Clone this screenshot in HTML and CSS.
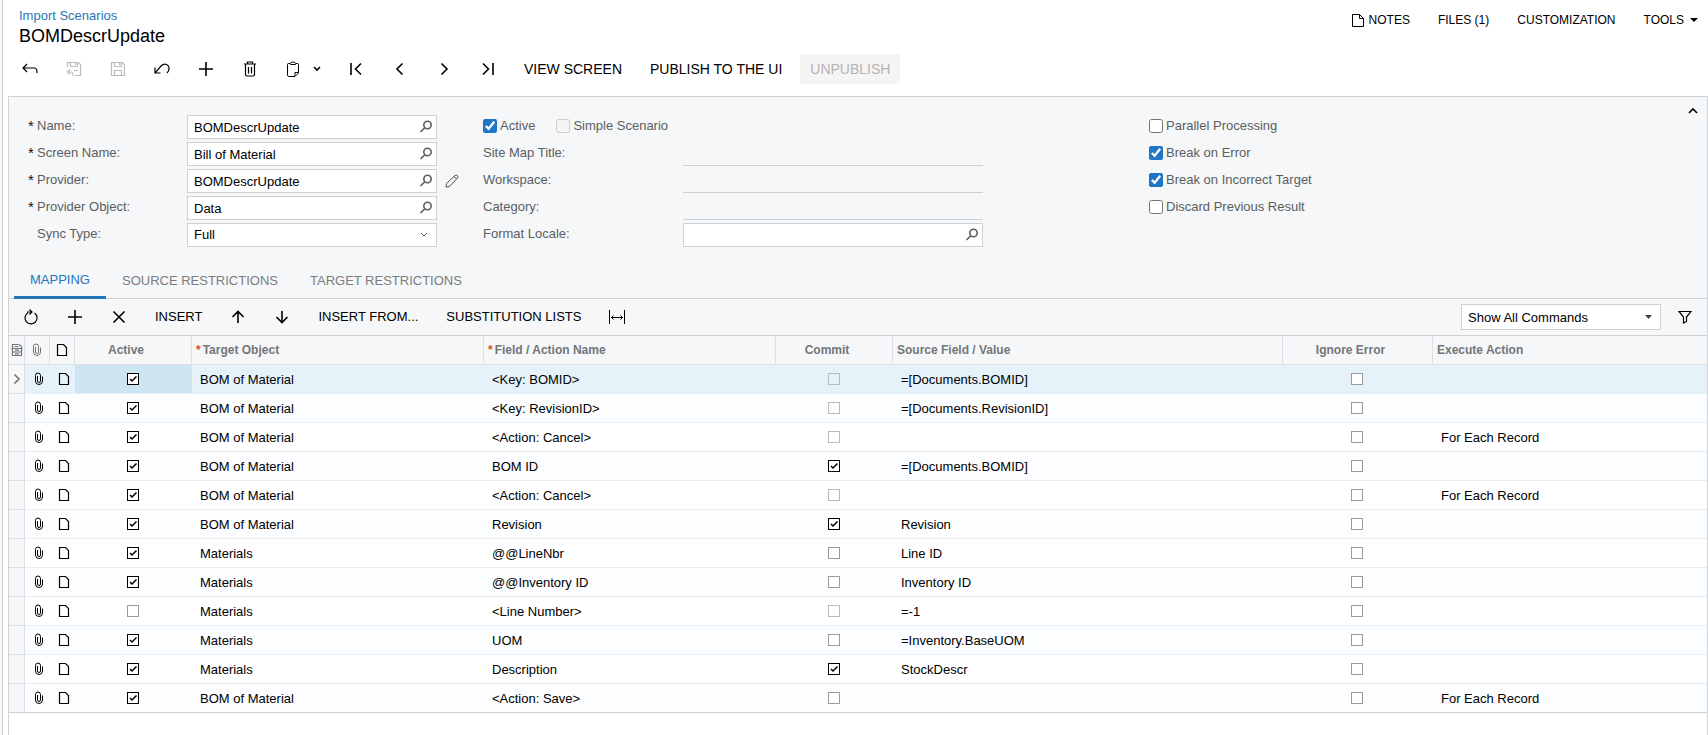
FILE: index.html
```html
<!DOCTYPE html>
<html lang="en">
<head>
    <meta charset="UTF-8">
    <title>Import Scenarios</title>
    <link rel="stylesheet" href="styles.css">
</head>
<body>
    <svg class="icon-defs" aria-hidden="true">
        <symbol id="search" viewBox="0 0 14 14"><circle cx="8.5" cy="5" r="3.7"/><path d="M5.8 7.8 1.5 12"/></symbol>
        <symbol id="clip" viewBox="0 0 10 14"><path d="M1.500 3.500v5.500a3.500 3.500 0 0 0 7 0V4.500M1.500 3.500a2.500 2.500 0 0 1 5 0V9a1.500 1.500 0 0 1-3 0V4"/></symbol>
        <symbol id="page" viewBox="0 0 12 14"><path d="M1.500 1.500h6l3 3v8h-9z"/></symbol>
        <symbol id="plus" viewBox="0 0 16 16"><path d="M8 1v14M1 8h14"/></symbol>
    </svg>

    <div class="page">
        <header class="header">
            <div>
                <a class="breadcrumb" href="#">Import Scenarios</a>
                <h1>BOMDescrUpdate</h1>
            </div>
            <nav class="menu">
                <button type="button">
                    <svg class="thin" width="14" height="15" viewBox="0 0 14 15"><path d="M1.500 1.500h7l4 4v8h-11zM8.500 1.500v4h4"/></svg>
                    NOTES
                </button>
                <button type="button">FILES (1)</button>
                <button type="button">CUSTOMIZATION</button>
                <button type="button">TOOLS <span class="caret"></span></button>
            </nav>
        </header>

        <div class="toolbar main-toolbar">
            <button type="button" class="icon-btn" aria-label="Back">
                <svg width="16" height="16" viewBox="0 0 16 16"><path d="M5 3 1 7l4 4M1 7h11q3 0 3 4v1"/></svg>
            </button>
            <button type="button" class="icon-btn" aria-label="Save and Close" disabled>
                <svg width="16" height="16" viewBox="0 0 16 16"><path d="M1.500 6V1.500h11l2 2v11H9M4.500 1.500v4h7v-4M9.500 2v2M8 9.500h4M4 8.500l-2.500 2.500L4 13.500M1.500 11H5q2 0 2 3v1"/></svg>
            </button>
            <button type="button" class="icon-btn" aria-label="Save" disabled>
                <svg width="16" height="16" viewBox="0 0 16 16"><path d="M1.500 1.500h11l2 2v11h-13zM4.500 1.500v4h7v-4M9.500 2v2M4.500 14.500v-5h7v5"/></svg>
            </button>
            <button type="button" class="icon-btn" aria-label="Undo">
                <svg width="16" height="16" viewBox="0 0 16 16"><path d="M1 6.500V12h5.500M1.200 11.800 7 5q3.500-3.500 7-.5 2.500 3.500-1 7.500"/></svg>
            </button>
            <button type="button" class="icon-btn" aria-label="Add">
                <svg class="bold" width="16" height="16"><use href="#plus"/></svg>
            </button>
            <button type="button" class="icon-btn" aria-label="Delete">
                <svg width="12" height="16" viewBox="0 0 12 16"><path d="M0 3h12M3.500 3V1h5v2M1.500 3v10.500q0 1.500 1.500 1.500h6q1.500 0 1.500-1.500V3M4.500 6v6.500M7.500 6v6.500"/></svg>
            </button>
            <button type="button" class="icon-btn clipboard-btn" aria-label="Clipboard">
                <svg class="thin" width="14" height="16" viewBox="0 0 14 16"><path d="M4 2.500H2.500q-1 0-1 1v10q0 2 1 2H9l3.500-3.500V3.500q0-1-1-1H10M4.500 3.500v-1q0-1.500 2.500-1.500t2.500 1.500v1zM9 15v-3.500h3.500"/></svg>
                <svg class="bold" width="8" height="6" viewBox="0 0 8 6"><path d="m1 1 3 3 3-3"/></svg>
            </button>
            <button type="button" class="icon-btn" aria-label="First">
                <svg class="bold" width="14" height="14" viewBox="0 0 14 14"><path d="M2 1v12M12 1.500 6.500 7l5.500 5.500"/></svg>
            </button>
            <button type="button" class="icon-btn" aria-label="Previous">
                <svg class="bold" width="14" height="14" viewBox="0 0 14 14"><path d="M9.500 1.500 4 7l5.500 5.500"/></svg>
            </button>
            <button type="button" class="icon-btn" aria-label="Next">
                <svg class="bold" width="14" height="14" viewBox="0 0 14 14"><path d="M4.500 1.500 10 7l-5.500 5.500"/></svg>
            </button>
            <button type="button" class="icon-btn" aria-label="Last">
                <svg class="bold" width="14" height="14" viewBox="0 0 14 14"><path d="M12 1v12M2 1.500 7.500 7 2 12.500"/></svg>
            </button>
            <button type="button" class="text-btn">VIEW SCREEN</button>
            <button type="button" class="text-btn">PUBLISH TO THE UI</button>
            <button type="button" class="text-btn" disabled>UNPUBLISH</button>
        </div>

        <main class="panel">
            <form class="form" onsubmit="event.preventDefault();">
                <div class="group">
                    <div class="field">
                        <label class="required" for="name">Name:</label>
                        <div class="box"><input id="name" type="text" value="BOMDescrUpdate"><svg width="14" height="14"><use href="#search"/></svg></div>
                    </div>
                    <div class="field">
                        <label class="required" for="screen-name">Screen Name:</label>
                        <div class="box"><input id="screen-name" type="text" value="Bill of Material"><svg width="14" height="14"><use href="#search"/></svg></div>
                    </div>
                    <div class="field">
                        <label class="required" for="provider">Provider:</label>
                        <div class="box"><input id="provider" type="text" value="BOMDescrUpdate"><svg width="14" height="14"><use href="#search"/></svg></div>
                        <button type="button" class="edit-btn" aria-label="Edit Provider">
                            <svg class="thin" width="14" height="14" viewBox="0 0 14 14"><path d="m1 13 .5-3.500L10 1.500q1.500-1 2.500 0t0 2.500L4.500 12.500zM9 2.500 11.500 5"/></svg>
                        </button>
                    </div>
                    <div class="field">
                        <label class="required" for="provider-object">Provider Object:</label>
                        <div class="box"><input id="provider-object" type="text" value="Data"><svg width="14" height="14"><use href="#search"/></svg></div>
                    </div>
                    <div class="field">
                        <label for="sync-type">Sync Type:</label>
                        <select id="sync-type" class="sync-type">
                            <option>Full</option>
                            <option>Incremental</option>
                        </select>
                    </div>
                </div>

                <div class="group middle">
                    <div class="field checks">
                        <label class="check"><input type="checkbox" checked>Active</label>
                        <label class="check"><input type="checkbox" disabled>Simple Scenario</label>
                    </div>
                    <div class="field">
                        <label for="site-map">Site Map Title:</label>
                        <input id="site-map" class="line-input" type="text" readonly>
                    </div>
                    <div class="field">
                        <label for="workspace">Workspace:</label>
                        <input id="workspace" class="line-input" type="text" readonly>
                    </div>
                    <div class="field">
                        <label for="category">Category:</label>
                        <input id="category" class="line-input" type="text" readonly>
                    </div>
                    <div class="field">
                        <label for="locale">Format Locale:</label>
                        <div class="box"><input id="locale" type="text"><svg width="14" height="14"><use href="#search"/></svg></div>
                    </div>
                </div>

                <div class="group options">
                    <div class="field"><label class="check"><input type="checkbox">Parallel Processing</label></div>
                    <div class="field"><label class="check"><input type="checkbox" checked>Break on Error</label></div>
                    <div class="field"><label class="check"><input type="checkbox" checked>Break on Incorrect Target</label></div>
                    <div class="field"><label class="check"><input type="checkbox">Discard Previous Result</label></div>
                </div>

                <button type="button" class="collapse-btn" aria-label="Collapse">
                    <svg class="bold" width="10" height="7" viewBox="0 0 10 7"><path d="m1 6 4-4 4 4"/></svg>
                </button>
            </form>

            <div class="tabs" role="tablist">
                <button type="button" role="tab" class="active" aria-selected="true">MAPPING</button>
                <button type="button" role="tab">SOURCE RESTRICTIONS</button>
                <button type="button" role="tab">TARGET RESTRICTIONS</button>
            </div>

            <div class="toolbar grid-toolbar">
                <button type="button" class="icon-btn" aria-label="Refresh">
                    <svg width="14" height="16" viewBox="0 0 14 16"><path d="M4 3.700a6 6 0 1 0 6.500.3M3 3h5M5.500.5 8 3 5.500 5.500"/></svg>
                </button>
                <button type="button" class="icon-btn" aria-label="Add Row">
                    <svg class="bold" width="16" height="16"><use href="#plus"/></svg>
                </button>
                <button type="button" class="icon-btn" aria-label="Delete Row">
                    <svg class="bold" width="14" height="14" viewBox="0 0 14 14"><path d="m1.500 1.500 11 11M12.500 1.500l-11 11"/></svg>
                </button>
                <button type="button" class="text-btn">INSERT</button>
                <button type="button" class="icon-btn" aria-label="Move Up">
                    <svg class="bold" width="14" height="14" viewBox="0 0 14 14"><path d="M7 13V2M1.500 7 7 1.500 12.500 7"/></svg>
                </button>
                <button type="button" class="icon-btn" aria-label="Move Down">
                    <svg class="bold" width="14" height="14" viewBox="0 0 14 14"><path d="M7 1v11M1.500 7 7 12.500 12.500 7"/></svg>
                </button>
                <button type="button" class="text-btn">INSERT FROM...</button>
                <button type="button" class="text-btn">SUBSTITUTION LISTS</button>
                <button type="button" class="icon-btn" aria-label="Fit to Screen">
                    <svg class="thin" width="18" height="14" viewBox="0 0 18 14"><path d="M1.500 0v14M16.500 0v14M3 7.500h12M5.500 5.500l-2 2 2 2M12.500 5.500l2 2-2 2"/></svg>
                </button>
                <select class="command-filter" aria-label="Commands">
                    <option>Show All Commands</option>
                </select>
                <button type="button" class="icon-btn filter-btn" aria-label="Filter">
                    <svg width="14" height="14" viewBox="0 0 14 14"><path d="M1 1.500h12L8.500 7v4.500L5.500 13V7z"/></svg>
                </button>
            </div>

            <table class="grid">
                <colgroup>
                    <col class="col-row">
                    <col class="col-icon">
                    <col class="col-icon">
                    <col class="col-flag">
                    <col class="col-name">
                    <col class="col-name">
                    <col class="col-flag">
                    <col class="col-source">
                    <col class="col-ignore">
                    <col>
                </colgroup>
                <thead>
                    <tr>
                        <th class="icon"><svg width="12" height="12" viewBox="0 0 12 12"><path d="M1.500 4.500v-4h6M8 .5l2.500 2v2M.5 4.500h11M1.500 4.500v7h9v-7M1.500 8h9M3.500 2.500h4M4 6.200h4M4 9.800h4"/></svg></th>
                        <th class="icon"><svg class="thin" width="10" height="14"><use href="#clip"/></svg></th>
                        <th class="icon dark"><svg width="12" height="14"><use href="#page"/></svg></th>
                        <th class="flag">Active</th>
                        <th><span class="star">*</span>Target Object</th>
                        <th><span class="star">*</span>Field / Action Name</th>
                        <th class="flag">Commit</th>
                        <th>Source Field / Value</th>
                        <th class="flag">Ignore Error</th>
                        <th>Execute Action</th>
                    </tr>
                </thead>
                <tbody id="rows"></tbody>
            </table>
        </main>
    </div>
    <script src="script.js"></script>
</body>
</html>
```

FILE: styles.css
```css
* {
    box-sizing: border-box;
}

body {
    margin: 0;
    padding-left: 2px;
    background: #f5f7f9;
    color: #000;
    font-family: "Liberation Sans", Arial, sans-serif;
    font-size: 13px;
}

button, input, select {
    font: inherit;
    color: inherit;
}

button {
    padding: 0;
    border: none;
    background: none;
    cursor: pointer;
}

svg {
    flex: none;
    fill: none;
    stroke: currentColor;
    stroke-width: 1.2;
}

.thin {
    stroke-width: 1;
}

.bold {
    stroke-width: 1.6;
}

.icon-defs {
    display: none;
}

.page {
    display: flex;
    flex-direction: column;
    min-height: 100vh;
    padding-left: 5px;
    border-left: 1px solid #ced0d3;
    background: #fff;
}

/* header */
.header {
    display: flex;
    justify-content: space-between;
    padding: 8px 8px 0 11px;
}

.breadcrumb {
    display: block;
    line-height: 16px;
    color: #2a75b8;
    text-decoration: none;
}

h1 {
    margin: 0;
    font-size: 18px;
    font-weight: normal;
    line-height: 24px;
}

.menu {
    display: flex;
    align-items: flex-start;
    gap: 28px;
    padding-top: 4px;
}

.menu button {
    display: flex;
    align-items: center;
    gap: 4px;
    height: 16px;
    font-size: 12px;
}

.caret {
    margin: 0 2px;
    border: 4px solid transparent;
    border-top-color: #000;
    border-bottom: none;
}

/* toolbars */
.toolbar {
    display: flex;
    align-items: center;
    gap: 8px;
    padding-left: 4px;
}

.main-toolbar {
    height: 48px;
    padding-bottom: 6px;
    font-size: 14px;
}

.icon-btn {
    display: flex;
    align-items: center;
    justify-content: center;
    width: 36px;
    height: 30px;
}

.icon-btn:disabled {
    color: #b9bbbd;
}

.clipboard-btn {
    gap: 13px;
    width: 54px;
}

.text-btn {
    height: 30px;
    padding: 0 10px;
}

.text-btn:disabled {
    background: #f5f5f5;
    color: #b3b3b3;
}

/* form */
.panel {
    flex: 1;
    border: 1px solid #d0d3d6;
    border-bottom: none;
}

.form {
    position: relative;
    display: grid;
    grid-template-columns: 474px 666px 1fr;
    padding-top: 18px;
    height: 168px;
    background: #f5f7f9;
    color: #5b5e60;
}

.group {
    display: flex;
    flex-direction: column;
    gap: 3px;
    padding-left: 28px;
}

.middle, .options {
    padding-left: 0;
}

.field {
    display: flex;
    align-items: center;
    height: 24px;
}

.field > label {
    width: 150px;
    line-height: 16px;
    padding-bottom: 2px;
}

.middle .field > label {
    width: 200px;
}

.required::before {
    content: "*";
    display: inline-block;
    width: 9px;
    height: 12px;
    margin-left: -9px;
    color: #111;
    font-size: 15px;
    line-height: 16px;
    vertical-align: top;
}

.box {
    display: flex;
    align-items: center;
    width: 250px;
    height: 24px;
    padding: 0 3px 0 6px;
    border: 1px solid #ced1d4;
    background: #fff;
}

.box input {
    flex: 1;
    min-width: 0;
    padding: 0;
    border: none;
    outline: none;
    background: none;
    color: #000;
}

.box svg {
    stroke-width: 1.6;
}

.middle .box {
    width: 300px;
}

.line-input {
    width: 300px;
    height: 24px;
    border: none;
    border-bottom: 1px solid #ced1d4;
    background: none;
}

select {
    appearance: none;
    border: 1px solid #ced1d4;
    border-radius: 0;
    color: #000;
    background: #fff no-repeat right 8px center;
}

.sync-type {
    width: 250px;
    height: 24px;
    padding: 0 6px 2px;
    background-image: url("data:image/svg+xml,%3Csvg xmlns='http://www.w3.org/2000/svg' width='8' height='6'%3E%3Cpath d='m1 1 3 3 3-3' fill='none' stroke='%23555'/%3E%3C/svg%3E");
}

.edit-btn {
    display: flex;
    margin-left: 8px;
    color: #4d5052;
}

.field .check {
    display: flex;
    align-items: center;
    gap: 3px;
    width: auto;
}

.checks {
    gap: 21px;
}

.middle .checks .check {
    width: auto;
}

.check input {
    width: 14px;
    height: 14px;
    margin: 0;
    accent-color: #1f76c6;
}

.collapse-btn {
    position: absolute;
    top: 6px;
    right: 4px;
    width: 20px;
    height: 14px;
    color: #000;
}

.collapse-btn svg {
    display: block;
    margin: auto;
}

/* tabs */
.tabs {
    display: flex;
    height: 34px;
    padding-left: 5px;
    border-bottom: 1px solid #d0d3d6;
    background: #f5f7f9;
}

.tabs button {
    height: 34px;
    padding: 0 16px;
    border-bottom: 3px solid transparent;
    color: #7a7d7f;
}

.tabs .active {
    padding-bottom: 2px;
    border-bottom-color: #2676bc;
    color: #2676bc;
}

.grid-toolbar {
    height: 36px;
    padding-right: 4px;
    background: #f5f7f9;
}

.grid-toolbar .text-btn {
    padding-bottom: 2px;
}

.command-filter {
    width: 200px;
    height: 26px;
    margin-left: auto;
    padding: 0 6px;
    background-image: url("data:image/svg+xml,%3Csvg xmlns='http://www.w3.org/2000/svg' width='7' height='4'%3E%3Cpath d='M0 0h7L3.5 4z' fill='%23444'/%3E%3C/svg%3E");
}

.filter-btn {
    margin-left: -2px;
}

/* grid */
.grid {
    width: 100%;
    table-layout: fixed;
    border-spacing: 0;
    border-bottom: 1px solid #ced1d4;
}

.col-row {
    width: 16px;
}

.col-icon {
    width: 25px;
}

.col-flag {
    width: 117px;
}

.col-name {
    width: 292px;
}

.col-source {
    width: 390px;
}

.col-ignore {
    width: 150px;
}

.grid th {
    height: 30px;
    padding: 0 4px;
    border: 1px solid #dcdfe3;
    border-width: 1px 1px 1px 0;
    border-top-color: #ced1d4;
    background: #f5f7f9;
    color: #737678;
    font-size: 12px;
    text-align: left;
}

.grid th:last-child {
    border-right: none;
}

.grid th.flag {
    padding-right: 18px;
    text-align: center;
}

.grid th.icon {
    padding: 0;
}

.grid th.dark {
    color: #000;
}

.star {
    margin-right: 2px;
    color: #e0501c;
}

.grid td {
    height: 29px;
    padding: 0 8px;
    border-bottom: 1px solid #e4eef4;
}

.grid tr:nth-child(even) td {
    background: #fbfdff;
}

.grid tbody tr:last-child td {
    height: 28px;
    border-bottom: none;
}

.grid tr.selected td {
    background: #e5f2fa;
    border-bottom-color: #e5f2fa;
}

.grid tr.selected .first {
    background: #cde4f3;
}

.grid tbody tr td.row-mark {
    padding: 0;
    border-right: 1px solid #dcdfe3;
    border-bottom-color: #dcdfe3;
    background: #f5f7f9;
    color: #737678;
}

.grid td.icon {
    padding: 0 0 0 3px;
}

.icon svg, .row-mark svg {
    display: block;
    margin: auto;
}

.grid td.flag {
    padding: 0 2px 0 0;
    text-align: center;
}

.flag input {
    display: block;
    appearance: none;
    width: 12px;
    height: 12px;
    margin: auto;
    border: 1px solid #989b9e;
    background: #fff;
}

.flag input:checked {
    border-color: #000;
    background-image: url("data:image/svg+xml,%3Csvg xmlns='http://www.w3.org/2000/svg' width='10' height='10'%3E%3Cpath d='m2 5 2 2 4.500-4.500' fill='none' stroke='%23000' stroke-width='1.500'/%3E%3C/svg%3E");
}

.flag input:disabled {
    border-color: #b8bbbd;
    background: none;
}
```

FILE: script.js
```js
// active, target object, field, commit (null = read-only), source, execute action
const rows = [
    [true, 'BOM of Material', '<Key: BOMID>', null, '=[Documents.BOMID]', ''],
    [true, 'BOM of Material', '<Key: RevisionID>', null, '=[Documents.RevisionID]', ''],
    [true, 'BOM of Material', '<Action: Cancel>', null, '', 'For Each Record'],
    [true, 'BOM of Material', 'BOM ID', true, '=[Documents.BOMID]', ''],
    [true, 'BOM of Material', '<Action: Cancel>', null, '', 'For Each Record'],
    [true, 'BOM of Material', 'Revision', true, 'Revision', ''],
    [true, 'Materials', '@@LineNbr', false, 'Line ID', ''],
    [true, 'Materials', '@@Inventory ID', false, 'Inventory ID', ''],
    [false, 'Materials', '<Line Number>', null, '=-1', ''],
    [true, 'Materials', 'UOM', false, '=Inventory.BaseUOM', ''],
    [true, 'Materials', 'Description', true, 'StockDescr', ''],
    [true, 'BOM of Material', '<Action: Save>', false, '', 'For Each Record']
];

function addCell(tr, className, html) {
    const td = tr.insertCell();
    td.className = className;
    td.innerHTML = html;
    return td;
}

function addCheck(tr, className, label, value) {
    const td = addCell(tr, className, `<input type="checkbox" aria-label="${label}">`);
    td.firstChild.checked = value === true;
    td.firstChild.disabled = value === null;
}

function addText(tr, text) {
    tr.insertCell().textContent = text;
}

const body = document.getElementById('rows');

rows.forEach(([active, target, field, commit, source, action], i) => {
    const tr = body.insertRow();
    if (i === 0) {
        tr.className = 'selected';
    }
    addCell(tr, 'row-mark', i === 0 ? '<svg class="bold" width="8" height="12" viewBox="0 0 8 12"><path d="m1.500 1.500 4.500 4.500-4.500 4.500"/></svg>' : '');
    addCell(tr, 'icon', '<svg class="thin" width="10" height="14"><use href="#clip"/></svg>');
    addCell(tr, 'icon', '<svg width="12" height="14"><use href="#page"/></svg>');
    addCheck(tr, 'flag first', 'Active', active);
    addText(tr, target);
    addText(tr, field);
    addCheck(tr, 'flag', 'Commit', commit);
    addText(tr, source);
    addCheck(tr, 'flag', 'Ignore Error', false);
    addText(tr, action);
});
```
